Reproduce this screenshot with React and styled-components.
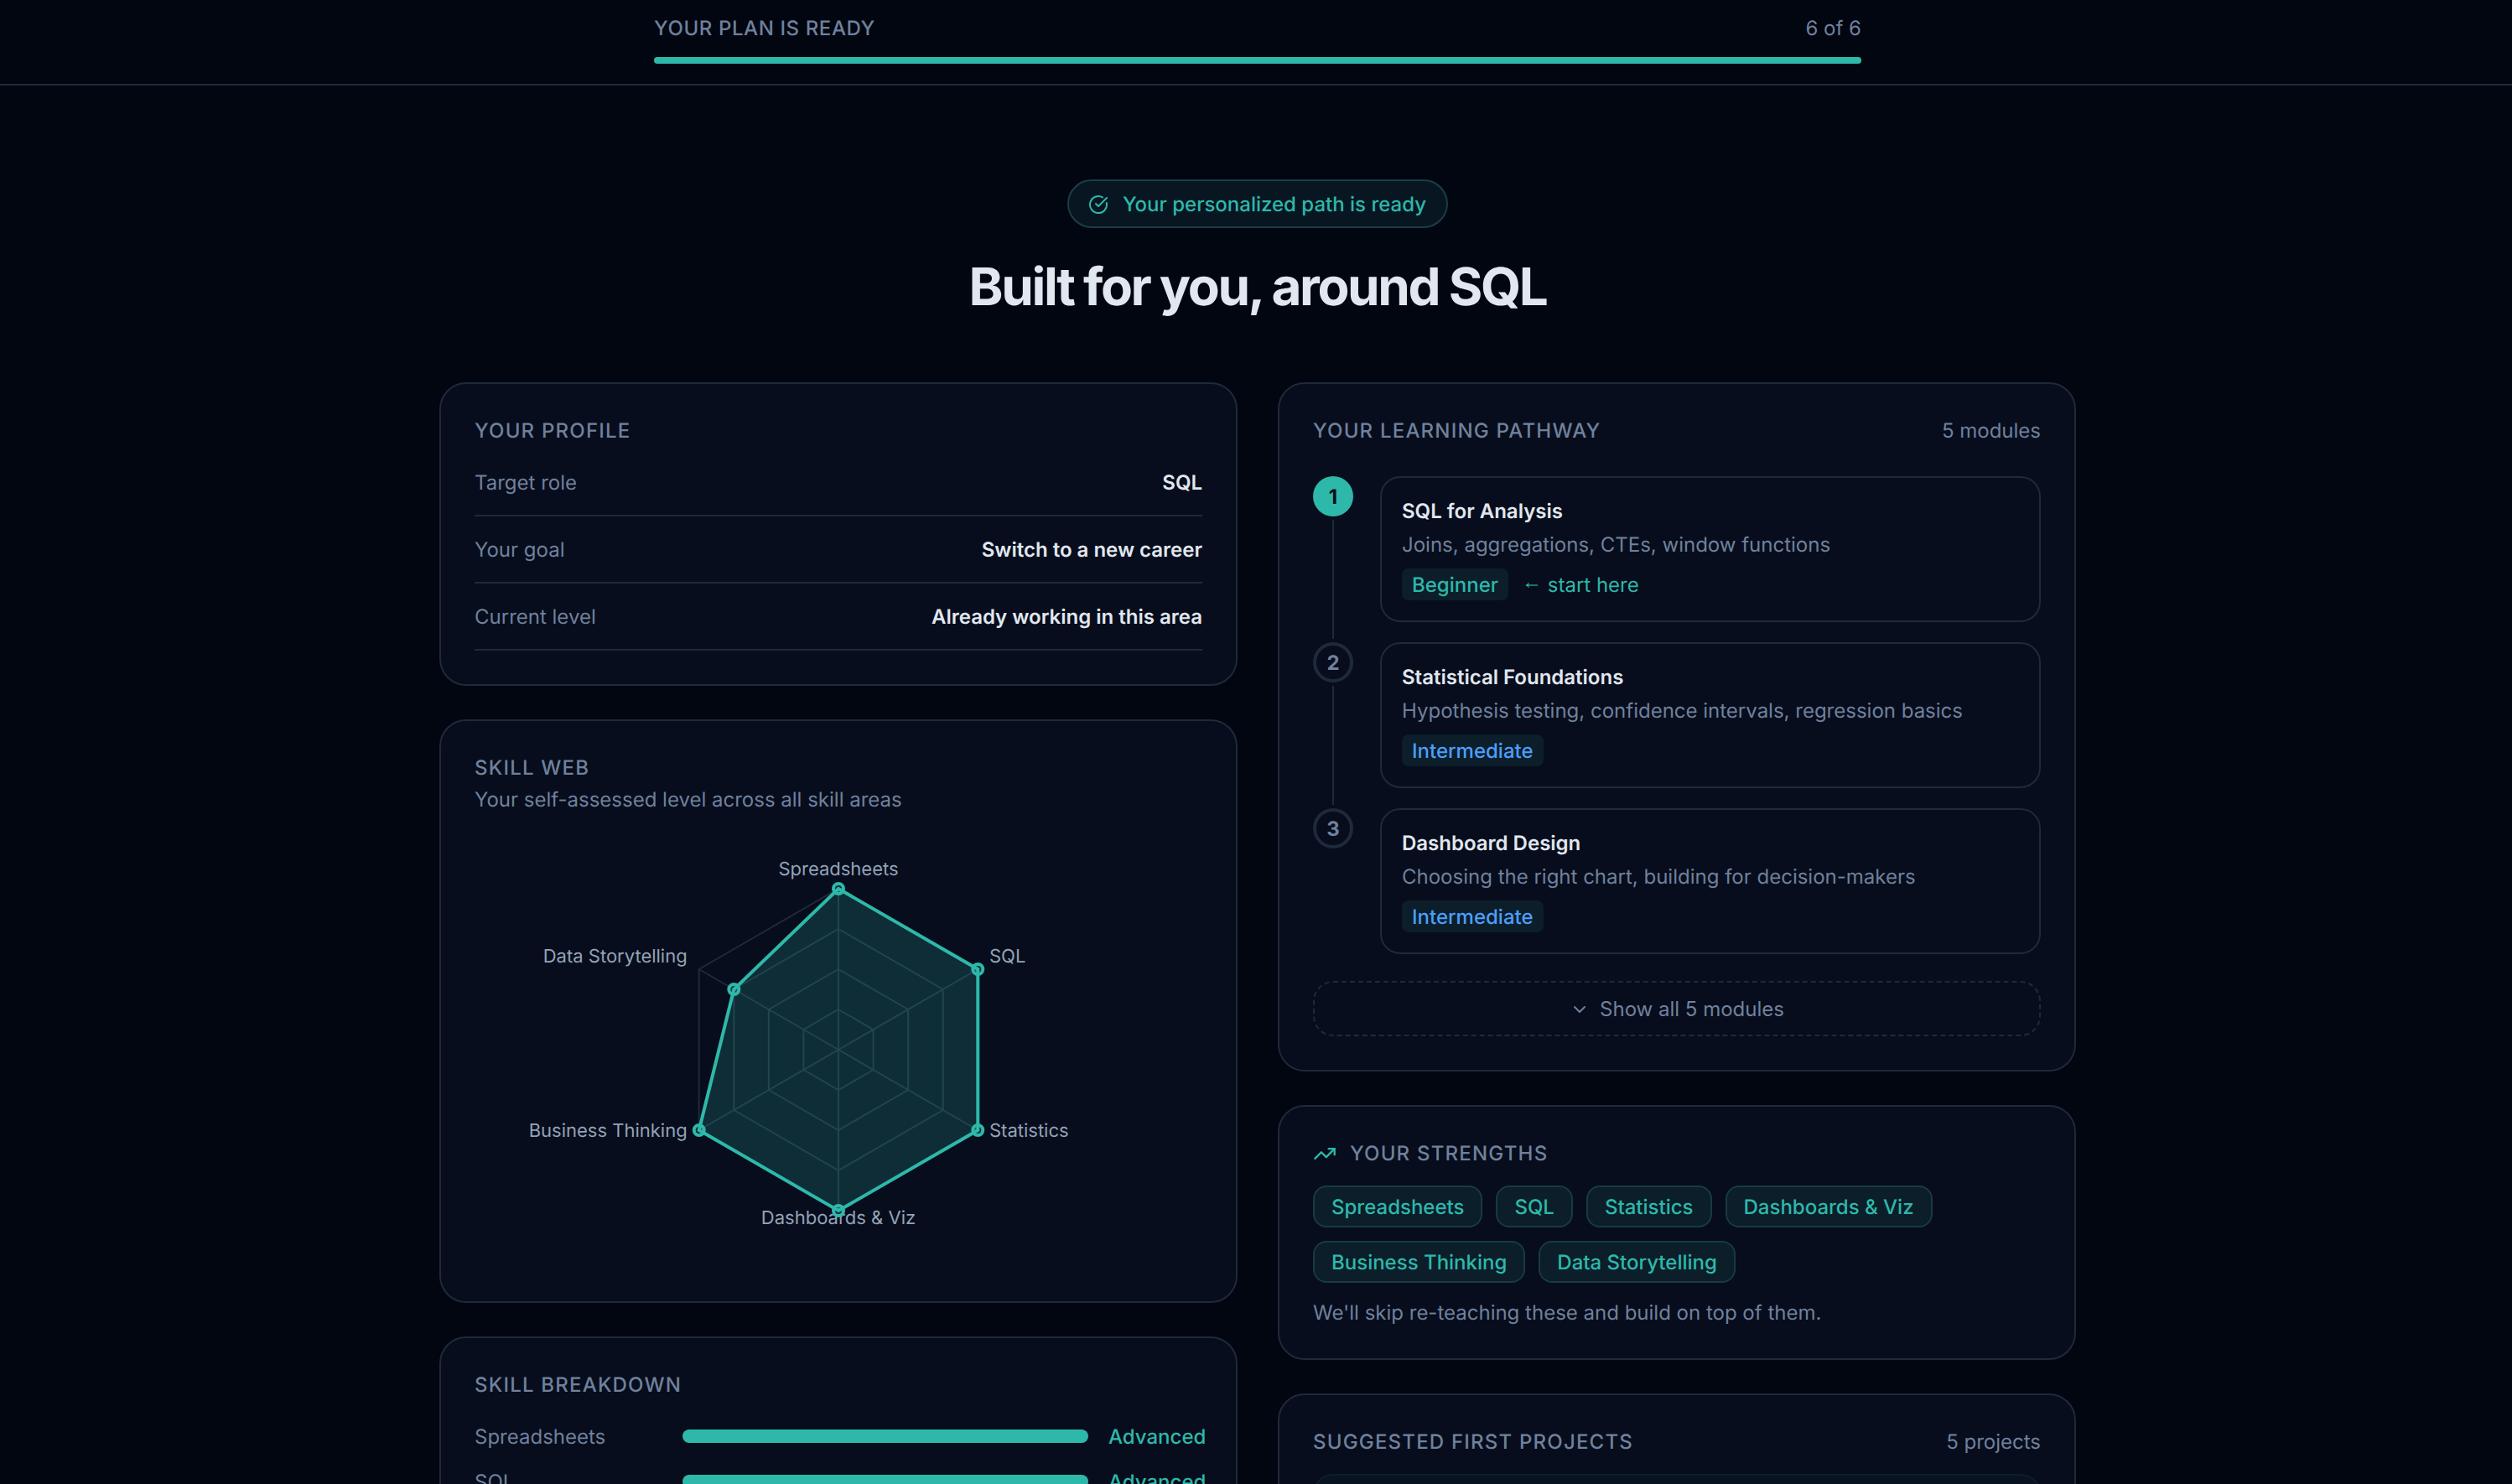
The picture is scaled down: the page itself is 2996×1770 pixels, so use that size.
import React from "react";
import styled, { createGlobalStyle, css } from "styled-components";
import { ChevronDown, CircleCheckBig, TrendingUp } from "lucide-react";

const c = {
  bg: "#020610",
  card: "#070d1c",
  line: "#1e2a3b",
  teal: "#2eb8aa",
  muted: "#70819d",
  text: "#e1e7ef",
  label: "#94a3b8",
  blue: "#4d9ef9",
};

const GlobalStyle = createGlobalStyle`
  *, *::before, *::after { box-sizing: border-box; }
  html, body { margin: 0; height: 1770px; overflow: hidden; background: ${c.bg}; }
  body {
    font-family: Inter, "Liberation Sans", sans-serif;
    font-size: 24px;
    line-height: 32px;
    color: ${c.text};
    text-rendering: geometricPrecision;
    -webkit-font-smoothing: antialiased;
  }
  h1, h2, h3, p { margin: 0; font-weight: inherit; font-size: inherit; }
`;

const Page = styled.div`
  width: 3000px;
  height: 1770px;
  overflow: hidden;
  background: ${c.bg};
`;

const TopBar = styled.header`
  height: 102px;
  padding-top: 18px;
  border-bottom: 2px solid ${c.line};
`;

const TopBarInner = styled.div`
  width: 1440px;
  margin: 0 auto;
`;

const Between = styled.div`
  display: flex;
  align-items: center;
  justify-content: space-between;
`;

const Eyebrow = styled.h2`
  font-weight: 500;
  letter-spacing: ${(p) => p.$tracking || "1.2px"};
  color: ${c.muted};
  text-transform: uppercase;
`;

const Muted = styled.span`
  color: ${c.muted};
`;

const Progress = styled.div`
  height: 8px;
  margin-top: 18px;
  border-radius: 8px;
  background: ${c.teal};
`;

const Hero = styled.section`
  display: flex;
  flex-direction: column;
  align-items: center;
  padding-top: 112px;
  height: 354px;
`;

const ReadyBadge = styled.div`
  display: flex;
  align-items: center;
  gap: 17px;
  height: 58px;
  padding: 2px 24px 0 23px;
  border: 2px solid #1b3d49;
  border-radius: 29px;
  background: #081622;
  color: ${c.teal};
  font-weight: 500;
`;

const Headline = styled.h1`
  margin-top: 30px;
  font-size: 62px;
  line-height: 80px;
  font-weight: 650;
  letter-spacing: -2.35px;
  word-spacing: -1px;
  color: ${c.text};
  white-space: nowrap;
`;

const Columns = styled.main`
  display: grid;
  grid-template-columns: 952px 952px;
  gap: 48px;
  justify-content: center;
  align-items: start;
`;

const Column = styled.div`
  display: flex;
  flex-direction: column;
  gap: 40px;
`;

const Card = styled.section`
  padding: 40px;
  border: 2px solid ${c.line};
  border-radius: 32px;
  background: ${c.card};
`;

const ProfileRows = styled.div`
  margin-top: 6px;
`;

const ProfileRow = styled(Between)`
  padding: 24px 0 22px;
  border-bottom: 2px solid ${c.line};
`;

const Value = styled.span`
  font-weight: 600;
  color: ${c.text};
`;

const Subtitle = styled.p`
  margin-top: 6px;
  color: ${c.muted};
`;

const RadarSvg = styled.svg`
  display: block;
  margin-top: 22px;
  overflow: visible;
  text {
    font-size: 22px;
    fill: ${c.label};
  }
`;

const Bars = styled.div`
  display: flex;
  flex-direction: column;
  gap: 22px;
  margin-top: 30px;
`;

const BarRow = styled.div`
  display: grid;
  grid-template-columns: 224px 1fr 112px;
  gap: 24px;
  align-items: center;
`;

const Bar = styled.div`
  height: 16px;
  margin-bottom: 2px;
  border-radius: 8px;
  background: ${c.teal};
`;

const Level = styled.span`
  color: ${c.teal};
  font-weight: 500;
  white-space: nowrap;
`;

const Steps = styled.div`
  display: flex;
  flex-direction: column;
  margin-top: 38px;
`;

const Step = styled.div`
  display: flex;
  gap: 32px;
`;

const Rail = styled.div`
  display: flex;
  flex-direction: column;
  align-items: center;
  width: 48px;
`;

const StepNumber = styled.div`
  display: flex;
  align-items: center;
  justify-content: center;
  width: 48px;
  height: 48px;
  flex: none;
  padding-top: 2px;
  border-radius: 50%;
  font-weight: 700;
  ${(p) =>
    p.$active
      ? css`
          background: ${c.teal};
          color: ${c.card};
        `
      : css`
          border: 4px solid ${c.line};
          color: ${c.muted};
        `}
`;

const Connector = styled.div`
  flex: 1;
  width: 2px;
  margin: 4px 0;
  background: ${c.line};
`;

const StepCard = styled.div`
  flex: 1;
  height: 174px;
  margin-bottom: ${(p) => (p.$last ? "0" : "24px")};
  padding: 24px;
  border: 2px solid ${c.line};
  border-radius: 24px;
`;

const StepTitle = styled.h3`
  font-weight: 600;
  color: ${c.text};
`;

const StepText = styled.p`
  margin: 8px 0 12px;
  color: ${c.muted};
`;

const TagRow = styled.div`
  display: flex;
  align-items: baseline;
  gap: 16px;
`;

const Tag = styled.span`
  padding: 4px 12px 2px;
  border-radius: 8px;
  background: #0b1e2a;
  color: ${(p) => p.$color};
  font-weight: 500;
`;

const StartHere = styled.span`
  color: ${c.teal};
`;

const Arrow = styled.span`
  font-family: "Liberation Sans", Arial, sans-serif;
  line-height: 1;
  vertical-align: 4px;
`;

const ShowAll = styled.button`
  display: flex;
  align-items: center;
  justify-content: center;
  gap: 12px;
  width: 100%;
  height: 66px;
  margin-top: 32px;
  padding: 2px 0 0;
  border: 2px dashed ${c.line};
  border-radius: 24px;
  background: none;
  color: ${c.muted};
  font: inherit;
`;

const IconTitle = styled.div`
  display: flex;
  align-items: center;
  gap: 16px;
  svg {
    color: ${c.teal};
  }
`;

const Chips = styled.div`
  display: flex;
  flex-wrap: wrap;
  gap: 16px;
  margin-top: 22px;
`;

const Chip = styled.span`
  padding: 8px 20px 6px;
  border: 2px solid #183a44;
  border-radius: 16px;
  background: #0b1e2a;
  color: ${c.teal};
  font-weight: 500;
`;

const Note = styled.p`
  margin: 20px 0 -2px;
  color: ${c.muted};
`;

const Project = styled.div`
  height: 180px;
  margin-top: 22px;
  border: 2px solid #0c1e2a;
  border-radius: 24px;
  background: #081220;
`;

const CX = 434;
const CY = 260;
const R = 192;
const SKILLS = [
  { name: "Spreadsheets", value: 4, level: "Advanced" },
  { name: "SQL", value: 4, level: "Advanced" },
  { name: "Statistics", value: 4, level: "Advanced" },
  { name: "Dashboards & Viz", value: 4, level: "Advanced" },
  { name: "Business Thinking", value: 4, level: "Advanced" },
  { name: "Data Storytelling", value: 3, level: "Intermediate" },
];
const LABELS = [
  { x: 434, y: 52, anchor: "middle" },
  { x: 614, y: 156, anchor: "start" },
  { x: 614, y: 363.5, anchor: "start" },
  { x: 434, y: 467.5, anchor: "middle" },
  { x: 253.7, y: 363.5, anchor: "end" },
  { x: 253.7, y: 156, anchor: "end" },
];

const point = (i, r) => {
  const a = (Math.PI / 3) * i - Math.PI / 2;
  return [CX + r * Math.cos(a), CY + r * Math.sin(a)];
};
const ring = (r) => SKILLS.map((_, i) => point(i, r).join(",")).join(" ");

function Radar() {
  const pts = SKILLS.map((s, i) => point(i, (R * s.value) / 4));
  return (
    <RadarSvg width="868" height="520" viewBox="0 0 868 520">
      <g fill="none" stroke={c.line} strokeWidth="2">
        {SKILLS.map((s, i) => {
          const [x, y] = point(i, R);
          return <line key={s.name} x1={CX} y1={CY} x2={x} y2={y} />;
        })}
        {[1, 2, 3, 4].map((n) => (
          <polygon key={n} points={ring((R * n) / 4)} />
        ))}
      </g>
      {SKILLS.map((s, i) => (
        <text key={s.name} x={LABELS[i].x} y={LABELS[i].y} textAnchor={LABELS[i].anchor}>
          {s.name}
        </text>
      ))}
      <g fill={c.teal} fillOpacity="0.19" stroke={c.teal} strokeWidth="4">
        <polygon points={pts.map((p) => p.join(",")).join(" ")} />
        {pts.map(([x, y], i) => (
          <circle key={i} cx={x} cy={y} r="6" />
        ))}
      </g>
    </RadarSvg>
  );
}

const PROFILE = [
  ["Target role", "SQL"],
  ["Your goal", "Switch to a new career"],
  ["Current level", "Already working in this area"],
];

const MODULES = [
  { title: "SQL for Analysis", text: "Joins, aggregations, CTEs, window functions", tag: "Beginner", start: true },
  { title: "Statistical Foundations", text: "Hypothesis testing, confidence intervals, regression basics", tag: "Intermediate" },
  { title: "Dashboard Design", text: "Choosing the right chart, building for decision-makers", tag: "Intermediate" },
];

export default function App() {
  return (
    <Page>
      <GlobalStyle />
      <TopBar>
        <TopBarInner>
          <Between>
            <Eyebrow $tracking="0.6px">Your plan is ready</Eyebrow>
            <Muted>6 of 6</Muted>
          </Between>
          <Progress />
        </TopBarInner>
      </TopBar>
      <Hero>
        <ReadyBadge>
          <CircleCheckBig size={24} />
          Your personalized path is ready
        </ReadyBadge>
        <Headline>Built for you, around SQL</Headline>
      </Hero>
      <Columns>
        <Column>
          <Card>
            <Eyebrow>Your profile</Eyebrow>
            <ProfileRows>
              {PROFILE.map(([k, v]) => (
                <ProfileRow key={k}>
                  <Muted>{k}</Muted>
                  <Value>{v}</Value>
                </ProfileRow>
              ))}
            </ProfileRows>
          </Card>
          <Card>
            <Eyebrow>Skill web</Eyebrow>
            <Subtitle>Your self-assessed level across all skill areas</Subtitle>
            <Radar />
          </Card>
          <Card>
            <Eyebrow>Skill breakdown</Eyebrow>
            <Bars>
              {SKILLS.slice(0, 2).map((s) => (
                <BarRow key={s.name}>
                  <Muted>{s.name}</Muted>
                  <Bar />
                  <Level>{s.level}</Level>
                </BarRow>
              ))}
            </Bars>
          </Card>
        </Column>
        <Column>
          <Card>
            <Between>
              <Eyebrow>Your learning pathway</Eyebrow>
              <Muted>5 modules</Muted>
            </Between>
            <Steps>
              {MODULES.map((m, i) => {
                const last = i === MODULES.length - 1;
                return (
                  <Step key={m.title}>
                    <Rail>
                      <StepNumber $active={i === 0}>{i + 1}</StepNumber>
                      {!last && <Connector />}
                    </Rail>
                    <StepCard $last={last}>
                      <StepTitle>{m.title}</StepTitle>
                      <StepText>{m.text}</StepText>
                      <TagRow>
                        <Tag $color={m.start ? c.teal : c.blue}>{m.tag}</Tag>
                        {m.start && (
                          <StartHere>
                            <Arrow>←</Arrow> start here
                          </StartHere>
                        )}
                      </TagRow>
                    </StepCard>
                  </Step>
                );
              })}
            </Steps>
            <ShowAll>
              <ChevronDown size={24} />
              Show all 5 modules
            </ShowAll>
          </Card>
          <Card>
            <IconTitle>
              <TrendingUp size={28} />
              <Eyebrow>Your strengths</Eyebrow>
            </IconTitle>
            <Chips>
              {SKILLS.map((s) => (
                <Chip key={s.name}>{s.name}</Chip>
              ))}
            </Chips>
            <Note>We'll skip re-teaching these and build on top of them.</Note>
          </Card>
          <Card>
            <Between>
              <Eyebrow>Suggested first projects</Eyebrow>
              <Muted>5 projects</Muted>
            </Between>
            <Project />
          </Card>
        </Column>
      </Columns>
    </Page>
  );
}
